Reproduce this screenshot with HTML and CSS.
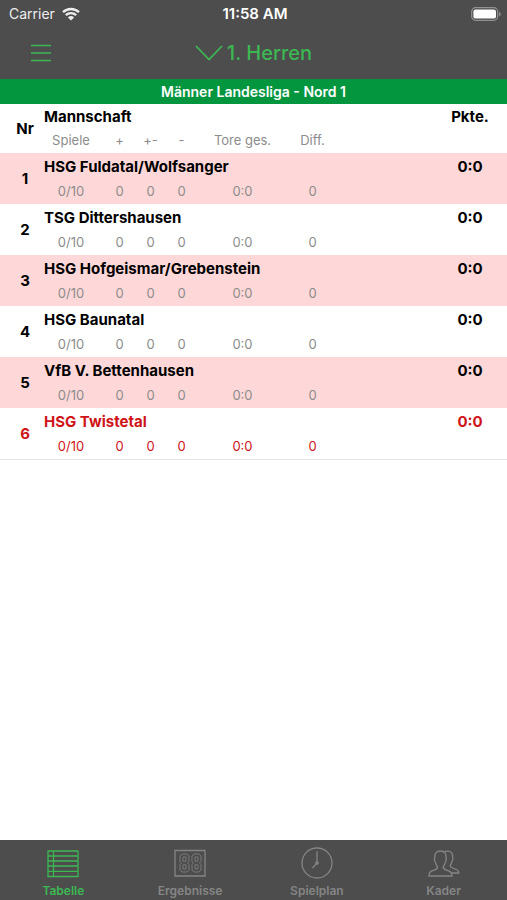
FILE: index.html
```html
<!DOCTYPE html>
<html lang="de">
<head>
<meta charset="utf-8">
<meta name="viewport" content="width=device-width, initial-scale=1">
<title>1. Herren – Tabelle</title>
<link rel="stylesheet" href="styles.css">
</head>
<body>
<header class="top">
  <div class="status">
    <div class="carrier">
      <span>Carrier</span>
      <svg class="wifi" viewBox="0 0 18 14" aria-hidden="true">
        <path d="M1 5.2a11.6 11.6 0 0 1 16 0M3.8 8.2a7.6 7.6 0 0 1 10.4 0" fill="none" stroke="currentColor" stroke-width="2.3"/>
        <path d="M5.9 10.4a4.6 4.6 0 0 1 6.2 0L9 13.6z" fill="currentColor"/>
      </svg>
    </div>
    <span class="time">11:58 AM</span>
    <svg class="battery" viewBox="0 0 30 14" aria-hidden="true">
      <rect x=".7" y=".7" width="26" height="12.6" rx="3.8" fill="none" stroke="#929292" stroke-width="1.2"/>
      <rect x="2.4" y="2.4" width="22.6" height="9.2" rx="2.2" fill="#fff"/>
      <path d="M28.2 4.7c2 .7 2 3.900 0 4.600z" fill="#929292"/>
    </svg>
  </div>
  <nav class="bar">
    <button class="menu" type="button" aria-label="Menü">
      <svg viewBox="0 0 22 18" aria-hidden="true"><path d="M1 1.500h20M1 9h20M1 16.500h20" fill="none" stroke="currentColor" stroke-width="1.500"/></svg>
    </button>
    <button class="team" type="button">
      <svg viewBox="0 0 28 16" aria-hidden="true"><path d="M1 1l13 13.500L27 1" fill="none" stroke="currentColor" stroke-width="1.800"/></svg>
      <span>1. Herren</span>
    </button>
  </nav>
</header>
<h1 class="league">Männer Landesliga - Nord 1</h1>
<main class="content">
  <table class="standings">
    <colgroup>
      <col class="c-nr"><col class="c-games"><col class="c-num"><col class="c-num"><col class="c-num"><col class="c-goals"><col class="c-diff"><col><col class="c-points">
    </colgroup>
    <thead>
      <tr class="name"><th class="nr" rowspan="2">Nr</th><th class="club" colspan="7">Mannschaft</th><th>Pkte.</th></tr>
      <tr class="detail"><th class="games">Spiele</th><th>+</th><th>+-</th><th>-</th><th>Tore ges.</th><th>Diff.</th><th colspan="2"></th></tr>
    </thead>
    <tbody>
      <tr class="name"><th class="nr" rowspan="2">1</th><th class="club" colspan="7">HSG Fuldatal/Wolfsanger</th><td>0:0</td></tr>
      <tr class="detail"><td class="games">0/10</td><td>0</td><td>0</td><td>0</td><td>0:0</td><td>0</td><td colspan="2"></td></tr>
    </tbody>
    <tbody>
      <tr class="name"><th class="nr" rowspan="2">2</th><th class="club" colspan="7">TSG Dittershausen</th><td>0:0</td></tr>
      <tr class="detail"><td class="games">0/10</td><td>0</td><td>0</td><td>0</td><td>0:0</td><td>0</td><td colspan="2"></td></tr>
    </tbody>
    <tbody>
      <tr class="name"><th class="nr" rowspan="2">3</th><th class="club" colspan="7">HSG Hofgeismar/Grebenstein</th><td>0:0</td></tr>
      <tr class="detail"><td class="games">0/10</td><td>0</td><td>0</td><td>0</td><td>0:0</td><td>0</td><td colspan="2"></td></tr>
    </tbody>
    <tbody>
      <tr class="name"><th class="nr" rowspan="2">4</th><th class="club" colspan="7">HSG Baunatal</th><td>0:0</td></tr>
      <tr class="detail"><td class="games">0/10</td><td>0</td><td>0</td><td>0</td><td>0:0</td><td>0</td><td colspan="2"></td></tr>
    </tbody>
    <tbody>
      <tr class="name"><th class="nr" rowspan="2">5</th><th class="club" colspan="7">VfB V. Bettenhausen</th><td>0:0</td></tr>
      <tr class="detail"><td class="games">0/10</td><td>0</td><td>0</td><td>0</td><td>0:0</td><td>0</td><td colspan="2"></td></tr>
    </tbody>
    <tbody class="own">
      <tr class="name"><th class="nr" rowspan="2">6</th><th class="club" colspan="7">HSG Twistetal</th><td>0:0</td></tr>
      <tr class="detail"><td class="games">0/10</td><td>0</td><td>0</td><td>0</td><td>0:0</td><td>0</td><td colspan="2"></td></tr>
    </tbody>
  </table>
</main>
<nav class="tabs">
  <a class="tab active" href="#tabelle" aria-current="page">
    <svg viewBox="0 0 32 32" aria-hidden="true"><path d="M1 4h30v25.500H1zM6.500 4v25.500M1 9h30M1 14h30M1 19h30M1 24.300h30"/></svg>
    <span>Tabelle</span>
  </a>
  <a class="tab" href="#ergebnisse">
    <svg viewBox="0 0 32 32" aria-hidden="true">
      <path d="M1 3.500h30v25.500H1z"/>
      <path class="fine" d="M8 7h5l2 2v5.500L13.500 16l1.500 1.500V23l-2 2H8l-2-2v-5.500L7.500 16 6 14.500V9zM9 10h3v4.200H9zM9 17.800h3V22H9zM20 7h5l2 2v5.500L25.500 16l1.500 1.500V23l-2 2h-5l-2-2v-5.500l1.500-1.500-1.500-1.500V9zM21 10h3v4.200h-3zM21 17.800h3V22h-3z"/>
    </svg>
    <span>Ergebnisse</span>
  </a>
  <a class="tab" href="#spielplan">
    <svg viewBox="0 0 32 32" aria-hidden="true"><circle cx="16" cy="16" r="15"/><path d="M16 4.500V16l-4.500 5"/><circle cx="16" cy="16" r="1.200"/></svg>
    <span>Spielplan</span>
  </a>
  <a class="tab" href="#kader">
    <svg viewBox="0 0 32 32" aria-hidden="true">
      <path d="M1 29c0-3 .8-4.300 3-5.100 3.600-1.300 5.200-1.500 5.400-3.300.1-1.200-.6-1.800-1.300-3.200-.6-1.200-.7-2.300-1.200-3.300-.7-1.200-.7-2.400-.1-3.200C6.400 6.500 8.100 4 12.400 4s6 2.500 5.600 6.900c.6.800.5 2-.2 3.200-.5 1-.6 2.100-1.200 3.300-.7 1.400-1.400 2-1.300 3.200.2 1.800 1.800 2 5.400 3.300 2.200.8 3.300 2.100 3.300 5.100z"/>
      <path d="M16.200 5.200c1-.8 2-1.100 3.200-1.100 4 0 5.600 2.400 5.200 6.400.6.700.5 1.900-.1 2.800-.5.900-.5 1.900-1.100 2.900-.6 1.200-1.200 1.800-1.100 2.800.2 1.500 1.600 1.900 4.900 3 2.500.8 3.500 1.700 3.600 4h-7.300"/>
    </svg>
    <span>Kader</span>
  </a>
</nav>
</body>
</html>
```
FILE: styles.css
```css
* {
  box-sizing: border-box;
}

body {
  margin: 0;
  min-height: 100vh;
  display: flex;
  flex-direction: column;
  background: #fff;
  color: #000;
  font-family: Inter, "Liberation Sans", sans-serif;
  font-size: 15px;
}

button {
  padding: 0;
  border: 0;
  background: none;
  color: inherit;
  font: inherit;
  cursor: pointer;
}

svg {
  display: block;
}

.top {
  background: #4d4d4d;
}

.status {
  display: grid;
  grid-template-columns: 1fr auto 1fr;
  align-items: center;
  height: 27px;
  padding: 0 6px 0 9px;
  color: #fff;
  font-size: 14px;
}

.carrier {
  display: flex;
  align-items: center;
  gap: 7px;
  color: #eee;
}

.wifi {
  width: 18px;
  height: 14px;
}

.time {
  font-size: 15px;
  font-weight: 600;
}

.battery {
  width: 30px;
  height: 14px;
  justify-self: end;
}

.bar {
  display: grid;
  grid-template-columns: 1fr auto 1fr;
  align-items: center;
  height: 52px;
  padding: 0 30px;
  color: #3cb853;
}

.menu {
  justify-self: start;
}

.menu svg {
  width: 22px;
  height: 18px;
}

.team {
  display: flex;
  align-items: center;
  gap: 4px;
  font-size: 20px;
  font-weight: 500;
}

.team svg {
  width: 28px;
  height: 16px;
}

.league {
  margin: 0;
  background: #04963f;
  color: #fff;
  font-size: 14px;
  font-weight: 600;
  line-height: 25px;
  text-align: center;
}

.content {
  flex: 1;
}

.standings {
  width: 100%;
  table-layout: fixed;
  border-collapse: collapse;
  border-bottom: 1px solid #e4e4e4;
}

.c-nr {
  width: 44px;
}

.c-games {
  width: 60px;
}

.c-num {
  width: 31px;
}

.c-goals {
  width: 91px;
}

.c-diff {
  width: 49px;
}

.c-points {
  width: 74px;
}

.standings th,
.standings td {
  padding: 0;
  text-align: center;
  white-space: nowrap;
}

.standings .nr {
  padding-left: 6px;
}

.standings .club {
  text-align: left;
}

.standings .games {
  padding-right: 6px;
}

.name {
  height: 27px;
}

.standings .name th,
.standings .name td {
  font-weight: 700;
}

.detail {
  height: 24px;
  color: #8c8c8c;
  font-size: 13px;
}

.detail th,
.detail td {
  font-weight: 400;
  line-height: 22px;
  vertical-align: top;
}

thead .name {
  height: 25px;
}

.standings tbody:nth-of-type(odd) {
  background: #fed8d8;
}

.own,
.own .detail {
  color: #cf1418;
}

.tabs {
  display: grid;
  grid-template-columns: repeat(4, 1fr);
  height: 60px;
  background: #4d4d4d;
}

.tab {
  display: flex;
  flex-direction: column;
  align-items: center;
  gap: 4px;
  padding-top: 7px;
  color: #858585;
  font-size: 12px;
  font-weight: 600;
  line-height: 16px;
  text-decoration: none;
}

.tab svg {
  width: 32px;
  height: 32px;
  fill: none;
  stroke: currentColor;
  stroke-width: 1.3;
}

.tab .fine {
  stroke-width: 0.8;
}

.tab.active {
  color: #3cb853;
}
```
